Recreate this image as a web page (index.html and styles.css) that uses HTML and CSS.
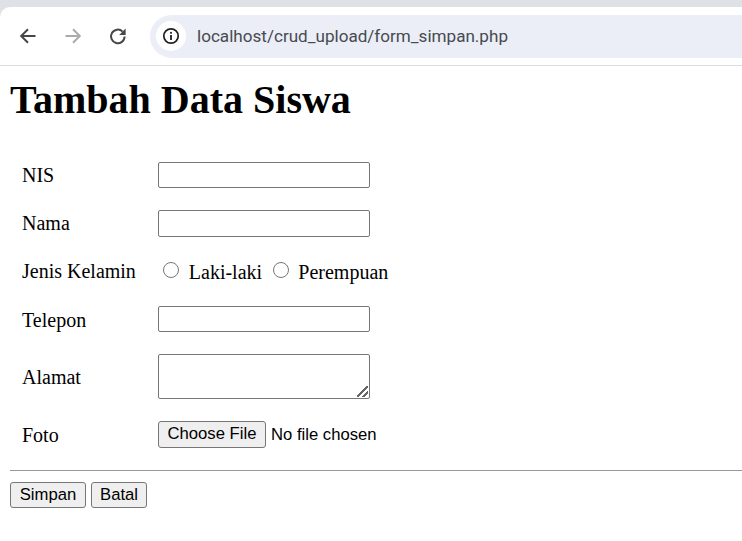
FILE: index.html
```html
<!DOCTYPE html>
<html lang="id">
<head>
    <meta charset="UTF-8">
    <meta name="viewport" content="width=device-width, initial-scale=1.0">
    <title>Tambah Data Siswa</title>
    <link rel="stylesheet" href="styles.css">
</head>
<body>

<div class="topstrip">
    <div class="toolbar">
        <span class="navbtn">
            <svg width="20" height="20" viewBox="0 0 20 20"><path d="M17.5 10H4M10 3.2L3.2 10l6.8 6.8" fill="none" stroke="#474747" stroke-width="2"/></svg>
        </span>
        <span class="navbtn">
            <svg width="20" height="20" viewBox="0 0 20 20"><path d="M2.5 10H16M10 3.2l6.8 6.8-6.8 6.8" fill="none" stroke="#a9abad" stroke-width="2"/></svg>
        </span>
        <span class="navbtn">
            <svg width="20" height="20" viewBox="0 0 20 20"><path d="M16.6 10.500a6.800 6.800 0 1 1-2-4.900" fill="none" stroke="#474747" stroke-width="2"/><path d="M17.600 2.600V9h-6.400z" fill="#474747"/></svg>
        </span>
        <div class="omnibox">
            <span class="siteinfo">
                <svg width="18" height="18" viewBox="0 0 18 18"><circle cx="9" cy="9" r="7.200" fill="none" stroke="#1f1f1f" stroke-width="1.700"/><rect x="8.100" y="8" width="1.800" height="5" fill="#1f1f1f"/><rect x="8.100" y="4.900" width="1.800" height="1.800" fill="#1f1f1f"/></svg>
            </span>
            <span class="url">localhost/crud_upload/form_simpan.php</span>
        </div>
    </div>
</div>

<div class="page">
    <h1>Tambah Data Siswa</h1>
    <form>
        <table class="formtable">
            <tr class="row-text">
                <td class="label">NIS</td>
                <td><input type="text" class="field"></td>
            </tr>
            <tr class="row-text">
                <td class="label">Nama</td>
                <td><input type="text" class="field field-tall"></td>
            </tr>
            <tr class="row-radio">
                <td class="label">Jenis Kelamin</td>
                <td class="radios">
                    <input type="radio" name="jk" class="radio"><span class="radiotext">Laki-laki</span>
                    <input type="radio" name="jk" class="radio"><span class="radiotext">Perempuan</span>
                </td>
            </tr>
            <tr class="row-text">
                <td class="label label-low">Telepon</td>
                <td><input type="text" class="field"></td>
            </tr>
            <tr class="row-area">
                <td class="label label-low">Alamat</td>
                <td><textarea class="area"></textarea></td>
            </tr>
            <tr class="row-file">
                <td class="label label-low">Foto</td>
                <td><input type="file" class="file"></td>
            </tr>
        </table>
        <hr class="rule">
        <div class="actions">
            <input type="submit" class="btn btn-simpan" value="Simpan">
            <input type="button" class="btn btn-batal" value="Batal">
        </div>
    </form>
</div>

</body>
</html>
```

FILE: styles.css
```css
body {
    margin: 0;
    background: #fff;
    color: #000;
    font-family: "Liberation Serif", serif;
    overflow: hidden;
}
.topstrip {
    background: #dee1e6;
    padding-top: 7px;
}
.toolbar {
    display: flex;
    align-items: center;
    height: 58px;
    background: #fff;
    border-top-left-radius: 10px;
    border-bottom: 1px solid #dadce0;
    padding-left: 18px;
}
.navbtn {
    width: 20px;
    height: 20px;
    display: flex;
}
.navbtn + .navbtn {
    margin-left: 25px;
}
.omnibox {
    flex: 1;
    height: 43px;
    margin-left: 22px;
    background: #ebeef7;
    border-radius: 22px 0 0 22px;
    display: flex;
    align-items: center;
    padding-left: 6px;
}
.siteinfo {
    width: 30px;
    height: 30px;
    border-radius: 50%;
    background: #fff;
    display: flex;
    align-items: center;
    justify-content: center;
}
.url {
    margin-left: 11px;
    font-family: "Roboto", "Liberation Sans", sans-serif;
    font-size: 17.1px;
    color: #474a4f;
}
.page {
    padding: 0 0 0 10px;
}
h1 {
    margin: 11px 0 28px;
    font-size: 40px;
    line-height: 46px;
    font-weight: bold;
}
.formtable {
    border-collapse: collapse;
}
.formtable td {
    box-sizing: border-box;
    padding: 0;
    vertical-align: middle;
}
.label {
    width: 148px;
    padding-left: 12px !important;
    font-size: 20px;
}
.label-low {
    padding-top: 2px !important;
}
.row-text td { height: 48px; }
.row-radio td { height: 48px; }
.row-area td { height: 67px; }
.row-file td { height: 48px; }
.field {
    display: block;
    box-sizing: border-box;
    width: 212px;
    height: 26px;
    margin: 0;
    padding: 1px 2px;
    border: 1px solid #767676;
    border-radius: 2px;
}
.field-tall { height: 27px; }
.radios {
    font-size: 20px;
    white-space: nowrap;
    padding-top: 2px !important;
}
.radio {
    width: 16px;
    height: 16px;
    margin: 0 9.8px 0 5px;
    vertical-align: 1px;
}
.radiotext { margin-right: 0.4px; }
.area {
    display: block;
    box-sizing: border-box;
    width: 212px;
    height: 45px;
    margin: 0;
    border: 1px solid #767676;
    border-radius: 2px;
}
.area::-webkit-resizer {
    background: linear-gradient(135deg, transparent 0 44%, #666 44% 56%, transparent 56% 70%, #666 70% 82%, transparent 82%) right 1px bottom 1px / 11px 11px no-repeat;
}
.file {
    display: block;
    font-family: "Liberation Sans", sans-serif;
    font-size: 16.67px;
    width: 240px;
}
.file::file-selector-button {
    box-sizing: border-box;
    height: 27px;
    width: 108px;
    margin: 0 5px 0 0;
    padding: 0;
    background: #efefef;
    border: 1px solid #767676;
    border-radius: 3px;
}
.rule {
    margin: 12px 0 11px;
    border: none;
    border-top: 1px solid #9a9a9a;
    height: 0;
}
.actions {
    display: flex;
    gap: 5px;
}
.btn {
    box-sizing: border-box;
    height: 26px;
    margin: 0;
    padding: 1px 0;
    font-family: "Liberation Sans", sans-serif;
    font-size: 16.67px;
    background: #efefef;
    border: 1px solid #767676;
    border-radius: 3px;
    color: #000;
}
.btn-simpan { width: 76px; }
.btn-batal { width: 56px; }
```
